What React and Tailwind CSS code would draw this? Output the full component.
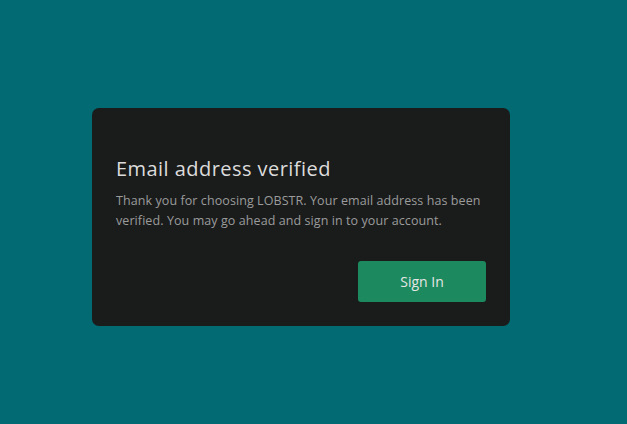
export default function App() {
  return (
    <div className="min-h-screen w-full bg-[#016a73] pt-[108px] pl-[92px]" style={{ fontFamily: '"Open Sans", "Noto Sans", sans-serif' }}>
      <div className="w-[418px] h-[218px] rounded-[7px] bg-[#1a1b1b] px-6 pt-[47px] pb-6 flex flex-col">
        <h1 className="text-[20px] leading-[28px] text-[#dcdcdc] tracking-[0.45px]">Email address verified</h1>
        <p className="mt-[8px] text-[12.5px] leading-[20px] text-[#9b9b9b] tracking-[0.08px]">
          Thank you for choosing LOBSTR. Your email address has been verified. You may go ahead and sign in to your account.
        </p>
        <div className="mt-auto flex justify-end">
          <button className="w-[128px] h-[41px] rounded-[3px] bg-[#1c8a5e] text-[14px] text-[#e6e6e6]">Sign In</button>
        </div>
      </div>
    </div>
  );
}
